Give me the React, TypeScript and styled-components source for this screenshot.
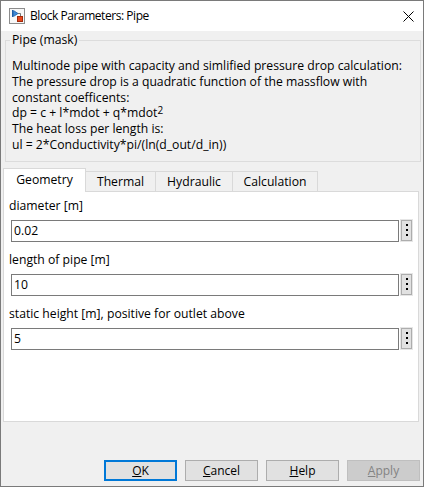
import React from "react";
import styled, { createGlobalStyle, css } from "styled-components";

const Global = createGlobalStyle`
  html, body { margin: 0; padding: 0; background: #f0f0f0; }
  * { box-sizing: border-box; }
`;

const Win = styled.div`
  width: 424px;
  height: 487px;
  border: 1px solid #7a7a7a;
  background: #f0f0f0;
  display: flex;
  flex-direction: column;
  font-family: "Open Sans", "Noto Sans", sans-serif;
  font-size: 12.2px;
  color: #000;
`;

const TitleBar = styled.div`
  height: 30px;
  flex: none;
  background: #fff;
  display: flex;
  align-items: center;
  padding-left: 8px;
`;

const TitleText = styled.span`
  margin-left: 5px;
  line-height: 16px;
  font-size: 12px;
  letter-spacing: -0.45px;
`;

const CloseBtn = styled.div`
  margin-left: auto;
  width: 30px;
  height: 30px;
  display: flex;
  align-items: center;
  justify-content: center;
`;

const Group = styled.fieldset`
  margin: 1px 2px 0 4px;
  padding: 10px 6px 8px;
  border: 1px solid #dcdcdc;
  min-width: 0;
`;

const Legend = styled.legend`
  padding: 0 2px;
  margin-left: -2px;
  line-height: 16px;
`;

const DescLine = styled.div`
  line-height: 15.8px;
  white-space: nowrap;
`;

const Sup = styled.span`
  font-size: 10px;
  vertical-align: 3px;
  line-height: 0;
`;

const TabStrip = styled.div`
  display: flex;
  align-items: flex-end;
  height: 23px;
  margin: 6px 0 0 2px;
  position: relative;
  z-index: 1;
`;

const Tab = styled.div<{ $w: number; $active?: boolean }>`
  width: ${(p) => p.$w}px;
  border: 1px solid #d9d9d9;
  border-bottom: none;
  display: flex;
  align-items: center;
  justify-content: center;
  & + & { margin-left: -1px; }
  ${(p) =>
    p.$active
      ? css`
          height: 24px;
          margin-bottom: -1px;
          background: #fff;
          position: relative;
          z-index: 2;
          padding-bottom: 1px;
        `
      : css`
          height: 20px;
          background: #f0f0f0;
        `}
`;

const Panel = styled.div`
  flex: 1;
  margin: 0 4px 0 2px;
  background: #fff;
  border: 1px solid #d9d9d9;
  padding: 6px 6px 0 5px;
  display: flex;
  flex-direction: column;
`;

const Field = styled.div`
  margin-bottom: 10px;
`;

const Label = styled.div`
  line-height: 16px;
`;

const InputRow = styled.div`
  display: flex;
  gap: 2px;
  margin-top: 6px;
  padding-left: 2px;
  align-items: flex-start;
`;

const TextInput = styled.input`
  flex: 1;
  min-width: 0;
  height: 22px;
  border: 1px solid #7a7a7a;
  padding: 0 2px;
  font: inherit;
  color: #000;
  background: #fff;
  outline: none;
`;

const DotsBtn = styled.div`
  width: 11px;
  height: 21px;
  border: 1px solid #adadad;
  background: #e1e1e1;
  box-shadow: 0 0 0 1px #e6e6e6;
  display: flex;
  flex-direction: column;
  align-items: center;
  justify-content: center;
  gap: 3px;
`;

const Dot = styled.span`
  width: 2px;
  height: 2px;
  background: #000;
`;

const ButtonBar = styled.div`
  display: flex;
  justify-content: flex-end;
  gap: 8px;
  margin: 38px 3px 5px 0;
`;

const Btn = styled.div<{ $primary?: boolean; $disabled?: boolean }>`
  width: 73px;
  height: 21px;
  border: 1px solid #adadad;
  background: #e1e1e1;
  display: flex;
  align-items: center;
  justify-content: center;
  line-height: 16px;
  font-size: 12px;
  ${(p) =>
    p.$primary &&
    css`
      border: 2px solid #0078d7;
    `}
  ${(p) =>
    p.$disabled &&
    css`
      background: #cccccc;
      border-color: #bfbfbf;
      color: #838383;
    `}
`;

const U = styled.span`
  text-decoration: underline;
`;

const BlockIcon = () => (
  <svg width="16" height="16" viewBox="0 0 16 16">
    <rect x="0.5" y="0.5" width="15" height="15" fill="#f7f7f7" stroke="#8c8c8c" />
    <line x1="3.5" y1="2" x2="3.5" y2="9" stroke="#1f5fa8" />
    <path d="M4.5 2.5 L9 5.5 L4.5 8.5 Z" fill="#3c8ad8" stroke="#1f5fa8" strokeWidth="0.8" />
    <path d="M9 5.5 H11.5 V8" fill="none" stroke="#555" strokeWidth="0.8" />
    <rect x="8.5" y="8.5" width="5" height="5" fill="#e8471c" stroke="#a32a0a" />
  </svg>
);

const CloseIcon = () => (
  <svg width="11" height="11" viewBox="0 0 11 11">
    <path d="M0.5 0.5 L10.5 10.5 M10.5 0.5 L0.5 10.5" stroke="#000" strokeWidth="1" />
  </svg>
);

const description: React.ReactNode[] = [
  "Multinode pipe with capacity and simlified pressure drop calculation:",
  "The pressure drop is a quadratic function of the massflow with",
  "constant coefficents:",
  <>
    dp = c + l*mdot + q*mdot<Sup>2</Sup>
  </>,
  "The heat loss per length is:",
  "ul = 2*Conductivity*pi/(ln(d_out/d_in))",
];

const tabs = [
  { name: "Geometry", w: 83 },
  { name: "Thermal", w: 71 },
  { name: "Hydraulic", w: 78 },
  { name: "Calculation", w: 86 },
];

const fields = [
  { label: "diameter [m]", value: "0.02" },
  { label: "length of pipe [m]", value: "10" },
  { label: "static height [m], positive for outlet above", value: "5" },
];

export default function App() {
  return (
    <>
      <Global />
      <Win>
        <TitleBar>
          <BlockIcon />
          <TitleText>Block Parameters: Pipe</TitleText>
          <CloseBtn>
            <CloseIcon />
          </CloseBtn>
        </TitleBar>
        <Group>
          <Legend>Pipe (mask)</Legend>
          {description.map((l, i) => (
            <DescLine key={i}>{l}</DescLine>
          ))}
        </Group>
        <TabStrip>
          {tabs.map((t, i) => (
            <Tab key={t.name} $w={t.w} $active={i === 0}>
              {t.name}
            </Tab>
          ))}
        </TabStrip>
        <Panel>
          {fields.map((f) => (
            <Field key={f.label}>
              <Label>{f.label}</Label>
              <InputRow>
                <TextInput defaultValue={f.value} readOnly />
                <DotsBtn>
                  <Dot />
                  <Dot />
                  <Dot />
                </DotsBtn>
              </InputRow>
            </Field>
          ))}
        </Panel>
        <ButtonBar>
          <Btn $primary>
            <span>
              <U>O</U>K
            </span>
          </Btn>
          <Btn>
            <span>
              <U>C</U>ancel
            </span>
          </Btn>
          <Btn>
            <span>
              <U>H</U>elp
            </span>
          </Btn>
          <Btn $disabled>
            <span>
              <U>A</U>pply
            </span>
          </Btn>
        </ButtonBar>
      </Win>
    </>
  );
}
